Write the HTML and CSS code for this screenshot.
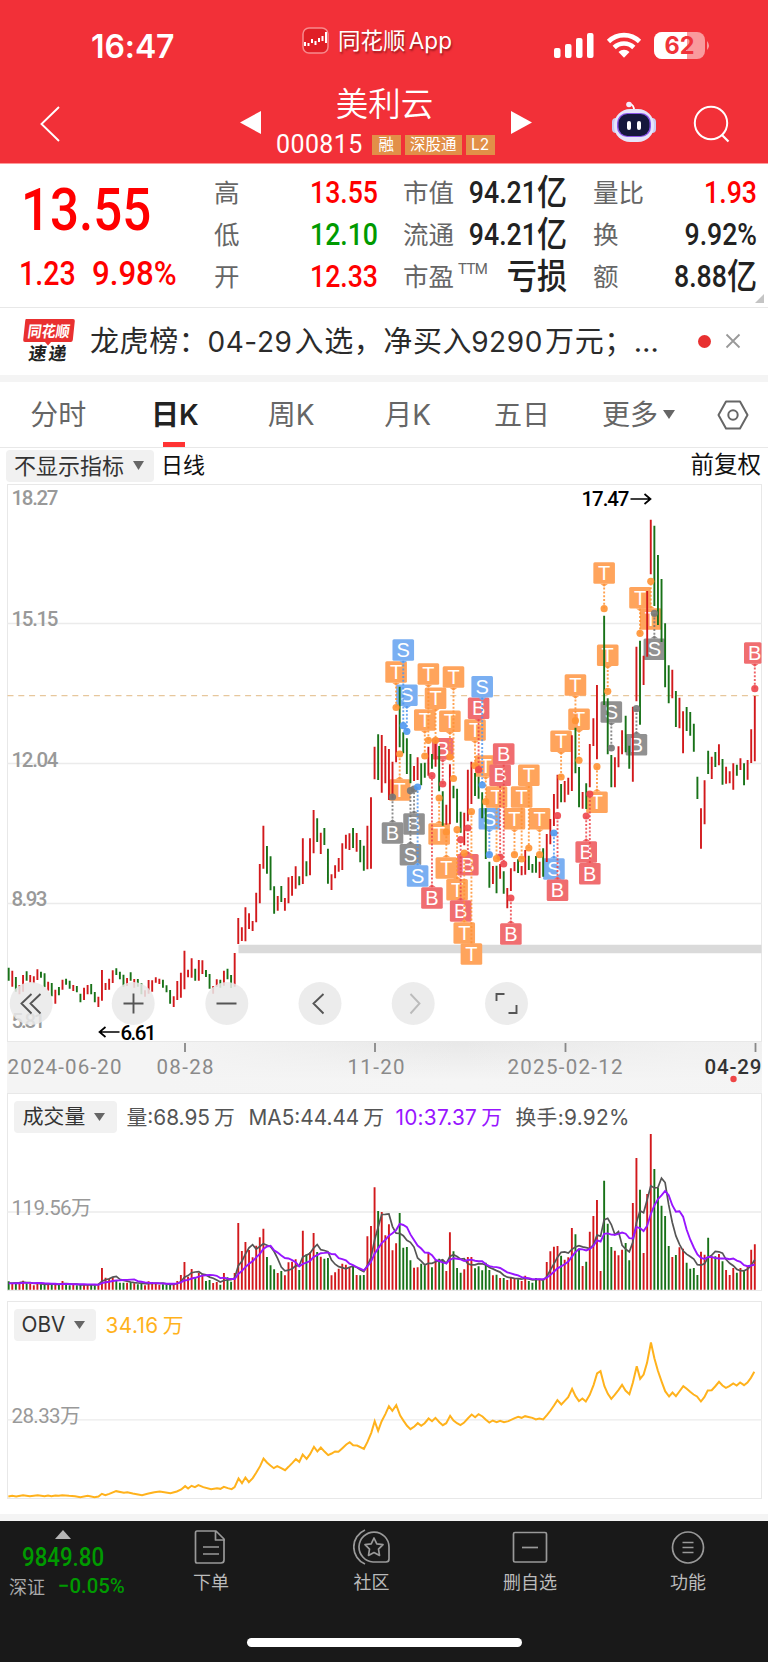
FILE: index.html
```html
<!DOCTYPE html>
<html lang="zh-CN">
<head>
<meta charset="utf-8">
<title>美利云 000815</title>
<link rel="stylesheet" href="styles.css">
</head>
<body>
<header class="top">
  <div class="status">
    <span class="time">16:47</span>
    <span class="app">
      <svg width="27" height="27" viewBox="0 0 27 27"><rect x="1" y="1" width="25" height="25" rx="6" fill="#e01f26" stroke="#f78a8d" stroke-width="1.5"/><path d="M3 15v4M6.500 16v3M10 12v4M13.500 14v4M17 11v4M20.500 9v5M24 5v11" stroke="#fff" stroke-width="2"/></svg>
      <span class="appname">同花顺 App</span>
    </span>
    <svg class="signals" width="158" height="30" viewBox="552 31 158 30">
      <g fill="#fff"><rect x="553" y="48" width="6.500" height="10" rx="2"/><rect x="564" y="44" width="6.500" height="14" rx="2"/><rect x="575" y="38" width="6.500" height="20" rx="2"/><rect x="586" y="33" width="6.500" height="25" rx="2"/></g>
      <g fill="none" stroke="#fff" stroke-width="4.600"><path d="M607.500 41.500a22 22 0 0 1 31 0"/><path d="M613.200 47.500a14 14 0 0 1 19.600 0"/></g>
      <path d="M617.500 52a8 8 0 0 1 11 0l-5.500 5.800z" fill="#fff"/>
      <rect x="653" y="32" width="51" height="27" rx="8" fill="#f99a9d"/><path d="M661 32h25v27h-25a8 8 0 0 1-8-8v-11a8 8 0 0 1 8-8z" fill="#fff"/><path d="M706 41q4 4.500 0 9z" fill="#f99a9d"/>
      <text x="663.500" y="54" textLength="30" lengthAdjust="spacingAndGlyphs" font-family="Inter" font-weight="700" font-size="24" fill="#f0333a">62</text>
    </svg>
  </div>
  <div class="titlebar">
    <svg class="back" width="20" height="36" viewBox="0 0 20 36"><path d="M19 1 1.500 18 19 35" fill="none" stroke="#fff" stroke-width="1.900"/></svg>
    <svg class="prev" width="21" height="23" viewBox="0 0 21 23"><path d="M21 0v23L0 11.500z" fill="#fff"/></svg>
    <div class="stock">
      <h1>美利云</h1>
      <div class="code"><span>000815</span><i>融</i><i class="w3">深股通</i><i>L2</i></div>
    </div>
    <svg class="next" width="21" height="23" viewBox="0 0 21 23"><path d="M0 0v23L21 11.500z" fill="#fff"/></svg>
    <svg class="robot" width="46" height="42" viewBox="0 0 46 42">
      <path d="M23 9q0-5-4-6" stroke="#fff" stroke-width="1.800" fill="none"/><circle cx="18" cy="3.500" r="2.800" fill="#f5edff"/>
      <rect x="1" y="17" width="8" height="15" rx="4" fill="#c8cdf3"/><rect x="37" y="17" width="8" height="15" rx="4" fill="#c8cdf3"/>
      <rect x="3" y="8" width="40" height="33" rx="16" fill="#e6e5fa"/><rect x="6" y="12" width="34" height="24" rx="10" fill="#8b55e8"/><rect x="7.500" y="13" width="31" height="22" rx="9" fill="#15183c"/>
      <path d="M18 22v5M28 22v5" stroke="#fff" stroke-width="4" stroke-linecap="round"/>
    </svg>
    <svg class="search" width="37" height="38" viewBox="0 0 37 38"><circle cx="18" cy="18" r="16.200" fill="none" stroke="#fff" stroke-width="2"/><path d="m29 30 6.500 6.500" stroke="#fff" stroke-width="2.200"/></svg>
  </div>
</header>

<section class="quote">
  <div class="price red"><b class="last"><span>13.55</span></b><div class="chg"><span>1.23</span><span>9.98%</span></div></div>
  <dl class="c1"><dt>高</dt><dd class="red">13.55</dd><dt>低</dt><dd class="green">12.10</dd><dt>开</dt><dd class="red">12.33</dd></dl>
  <dl class="c2"><dt>市值</dt><dd>94.21<em>亿</em></dd><dt>流通</dt><dd>94.21<em>亿</em></dd><dt>市盈<sup>TTM</sup></dt><dd><em>亏损</em></dd></dl>
  <dl class="c3"><dt>量比</dt><dd class="red">1.93</dd><dt>换</dt><dd>9.92%</dd><dt>额</dt><dd>8.88<em>亿</em></dd></dl>
  <svg class="corner" width="9" height="9"><path d="M9 0v9H0z" fill="#c4c4c4"/></svg>
</section>

<section class="news">
  <svg width="54" height="46" viewBox="22 318 54 46">
    <path d="M26 319h47q2 0 1.800 2l-2 19q-.3 2-2 2H51l-3 3.500-3-3.500H25q-2 0-1.800-2l2-19q.2-2 .8-2z" fill="#e93030"/>
    <g font-family="Noto Sans CJK SC" font-weight="700" transform="translate(48 337) skewX(-8)"><text x="-21" y="0" font-size="15.500" textLength="42" lengthAdjust="spacingAndGlyphs" fill="#fff">同花顺</text><text x="-17" y="23.500" font-size="18" textLength="38" fill="#222">速递</text></g>
  </svg>
  <p>龙虎榜：<b>04-29</b>入选，净买入<b>9290</b>万元；…</p>
  <span class="dot"></span>
  <svg width="16" height="16" viewBox="0 0 16 16"><path d="m1.500 1.500 13 13m0-13-13 13" stroke="#999" stroke-width="1.800"/></svg>
</section>

<nav class="tabs">
  <span>分时</span><span class="on">日K</span><span>周K</span><span>月K</span><span>五日</span><span>更多<svg width="12" height="9"><path d="M0 0h12L6 9z" fill="#666"/></svg></span>
  <svg class="gear" width="32" height="30" viewBox="0 0 32 30"><path d="M9 1.500h14L30.500 15 23 28.500H9L1.500 15z" fill="none" stroke="#666" stroke-width="2" stroke-linejoin="round"/><circle cx="16" cy="15" r="4.700" fill="none" stroke="#666" stroke-width="2"/></svg>
</nav>

<main>
<div class="indicator"><span class="pick">不显示指标<svg width="11" height="9"><path d="M0 0h11L5.500 9z" fill="#666"/></svg></span><span>日线</span><span class="adj">前复权</span></div>

<section class="panel kline">
  <svg width="755" height="558" viewBox="6.500 484 755 558">
    <path d="M7 623.500H761M7 763.500H761M7 903.500H761" stroke="#ebebeb" stroke-width="1.300"/>
    <path d="M7 695.700H761" stroke="#e7c79c" stroke-width="1.300" stroke-dasharray="6 4.800"/>
    <path d="M238 949H761" stroke="#dadada" stroke-width="8.400"/>
    <g class="axis"><text x="11" y="505" textLength="47">18.27</text><text x="11" y="626" textLength="47">15.15</text><text x="11" y="766.500" textLength="47">12.04</text><text x="11" y="906" textLength="36">8.93</text><text x="11" y="1028" textLength="34">5.81</text></g>
    <g id="marks"></g>
    <g id="lines"></g>
    <path id="kred" class="bar r"/><path id="kgreen" class="bar g"/>
    <g id="dots"></g>
    <g fill="#e9e9e9" fill-opacity=".86"><circle cx="30.700" cy="1003.500" r="21.500"/><circle cx="132.700" cy="1003.500" r="21.500"/><circle cx="226.300" cy="1003.500" r="21.500"/><circle cx="319.500" cy="1003.500" r="21.500"/><circle cx="412.700" cy="1003.500" r="21.500"/><circle cx="506" cy="1003.500" r="21.500"/></g>
    <g fill="none" stroke="#555" stroke-width="1.900"><path d="M31 994l-10 9.500 10 10M40 994l-10 9.500 10 10M123 1003.500h20M133 993.500v20M216 1003.500h20M323 994l-10 9.500 10 10M496 1001v-7h8M508 1013h8v-8"/><path d="M410 994l9 9.500-9 10" stroke="#bbb"/></g>
    <g class="peak"><text x="581" y="506" textLength="48">17.47</text><text x="120" y="1039.500" textLength="36">6.61</text><path d="M630 499H650m-6-5 6 5-6 5M119 1032H99m6-5-6 5 6 5"/></g>
  </svg>
</section>

<svg class="dates" width="755" height="51" viewBox="6.500 1042 755 51">
  <path d="M184.500 1043v9M374.500 1043v9M565 1043v9M755 1043v9" stroke="#888" stroke-width="1.800"/>
  <text x="7" y="1074" textLength="114">2024-06-20</text><text x="156" y="1074" textLength="57">08-28</text><text x="347" y="1074" textLength="57">11-20</text><text x="507" y="1074" textLength="115">2025-02-12</text><text class="now" x="704" y="1074" textLength="57">04-29</text>
  <circle cx="733" cy="1079" r="3.200" fill="#ee4545"/>
</svg>

<section class="panel volume">
  <svg width="755" height="198" viewBox="6.500 1093 755 198">
    <path d="M7 1212H761" stroke="#ebebeb" stroke-width="1.300"/>
    <text class="axisl" x="11" y="1215" textLength="80">119.56万</text>
    <path id="vred" class="bar r"/><path id="vgreen" class="bar g"/>
    <path id="ma5" fill="none" stroke="#555" stroke-width="1.700"/><path id="ma10" fill="none" stroke="#9815ff" stroke-width="1.900"/>
  </svg>
  <div class="legend"><span class="pick">成交量<svg width="11" height="8"><path d="M0 0h11L5.500 8z" fill="#666"/></svg></span><span class="v1">量:68.95<i>万</i></span><span class="v2">MA5:44.44<i>万</i></span><span class="v3">10:37.37<i>万</i></span><span>换手:9.92%</span></div>
</section>

<section class="panel obv">
  <svg width="755" height="198" viewBox="6.500 1301.500 755 198">
    <path d="M7 1420.300H761" stroke="#ebebeb" stroke-width="1.300"/>
    <text class="axisl" x="11" y="1423" textLength="69">28.33万</text>
    <g transform="translate(0 1300) scale(.4898 .33333)"><polyline vector-effect="non-scaling-stroke" fill="none" stroke="#ffb21c" stroke-width="2" points="16,591 24,589 32,591 46,587 60,590 76,587 90,590 97,588 104,590 112,588 119,589 126,587 140,589 152,590 163,593 178,589 192,593 200,591 207,583 214,587 222,583 236,575 252,580 259,578 270,582 289,587 300,583 314,578 325,576 347,581 360,576 369,570 377,560 383,567 390,559 397,563 404,557 414,563 430,569 442,566 449,568 456,562 464,566 472,569 478,563 486,537 493,551 500,534 507,548 515,536 522,520 530,500 537,477 544,489 551,498 558,506 565,500 573,506 581,512 588,502 596,490 603,479 610,487 617,465 625,478 632,464 640,442 647,456 654,444 662,457 669,467 676,462 683,456 690,457 698,446 706,435 713,428 720,437 728,438 742,448 749,428 757,400 764,365 771,394 778,366 786,343 793,320 800,334 808,317 816,348 823,364 830,379 837,389 845,381 852,371 859,379 866,371 874,357 881,365 888,355 896,368 903,377 910,371 918,349 925,363 932,371 939,377 946,370 954,357 962,345 969,353 976,344 984,351 991,361 998,369 1005,363 1013,368 1020,364 1028,368 1037,365 1050,356 1057,352 1064,355 1071,350 1080,353 1086,355 1093,360 1100,357 1108,360 1116,346 1123,333 1130,318 1137,302 1145,315 1152,304 1159,293 1167,268 1174,290 1181,305 1188,297 1195,306 1203,286 1211,256 1218,222 1225,215 1233,260 1240,283 1247,298 1254,286 1262,271 1269,256 1276,273 1284,284 1291,250 1299,200 1306,238 1313,225 1320,190 1328,129 1335,176 1342,213 1350,247 1357,275 1365,291 1372,279 1379,290 1386,276 1394,260 1401,268 1408,277 1415,285 1422,291 1430,306 1437,293 1444,273 1452,272 1459,261 1467,247 1474,258 1481,265 1488,260 1496,252 1503,258 1510,249 1518,257 1525,249 1532,235 1539,217"/></g>
  </svg>
  <div class="legend"><span class="pick">OBV<svg width="11" height="8"><path d="M0 0h11L5.500 8z" fill="#666"/></svg></span><span class="v4">34.16<i>万</i></span></div>
</section>
</main>

<footer>
  <div class="index"><svg width="16" height="9"><path d="M8 0l8 9H0z" fill="#b5b5b5"/></svg><b><span>9849.80</span></b><div><em>深证</em><span>−0.05%</span></div></div>
  <a class="f1"><svg width="36" height="36" viewBox="0 0 36 36"><path d="M4 2h19l8 8v21q0 3-3 3H4q-1.500 0-1.500-2V4Q2.500 2 4 2zM22.500 2v9H32M10 18h16M10 25h16"/></svg>下单</a>
  <a class="f2"><svg width="38" height="36" viewBox="0 0 38 36"><path d="M20 33A15 15 0 1 1 36 18v12q0 3-3 3zM12 1A18.500 18.500 0 0 0 12 35"/><path d="m21 9 2.800 5.800 6.200.9-4.500 4.400 1 6.300-5.500-2.900-5.500 2.900 1-6.300-4.500-4.400 6.200-.9z"/></svg>社区</a>
  <a class="f3"><svg width="36" height="36" viewBox="0 0 36 36"><rect x="1.500" y="3.500" width="33" height="29.500" rx="1.500"/><path d="M10 18.500h16"/></svg>删自选</a>
  <a class="f4"><svg width="36" height="36" viewBox="0 0 36 36"><circle cx="18" cy="18.500" r="15.500"/><path d="M12.500 13.500h11M12.500 18.500h11M12.500 23.500h11"/></svg>功能</a>
  <div class="home"></div>
</footer>
<script src="chart.js"></script>
</body>
</html>
```

FILE: styles.css
```css
* { box-sizing: border-box; }
html { height: 1662px; overflow: hidden; }
body { margin: 0; width: 768px; height: 1662px; background: #fff; color: #222; font-family: Inter, "Noto Sans CJK SC", sans-serif; overflow: hidden; }
svg { display: block; flex: none; }
b, i, em { font-style: normal; font-weight: inherit; }
span { white-space: nowrap; }
.red { color: #f00; }
.green { color: #009a00; }

.top { height: 164px; background: #f23038; color: #fff; border-bottom: 1px solid #f99; }
.status { display: flex; height: 92px; padding-left: 91px; }
.time { width: 211px; padding-top: 27px; font-weight: 600; font-size: 32px; line-height: 39px; letter-spacing: -.1px; }
.app { display: flex; width: 251px; padding-top: 27px; gap: 9px; }
.appname { font-size: 22.500px; line-height: 28px; word-spacing: -3px; text-shadow: 1px 2px 2px #9b1b20; }
.signals { margin-top: 31px; }
.titlebar { display: flex; height: 71px; }
.back { margin: 14px 180px 0 40px; }
.prev { margin-top: 19px; }
.stock { width: 250px; text-align: center; }
.stock h1 { margin: -7px 3px 0 0; font-weight: 350; font-size: 32.500px; line-height: 40px; }
.code { display: flex; margin: 9px 0 0 15px; gap: 4px; align-items: center; }
.code span { font: 25px/22px Roboto; letter-spacing: .4px; margin-right: 5px; }
.code i { width: 29px; height: 20px; background: #e28f48; font-size: 15.500px; line-height: 20px; }
.code .w3 { width: 57px; }
.next { margin: 19px 79px 0 0; }
.robot { margin: 9px 36px 0 0; }
.search { margin-top: 13px; }

.quote { position: relative; display: flex; height: 143.500px; font-family: Roboto, "Noto Sans CJK SC", sans-serif; border-bottom: 1px solid #e8e8e8; }
.price { width: 214px; font-weight: 500; }
.price span { display: inline-block; transform: scaleX(.865); transform-origin: 0 0; }
.last { display: block; padding: 16px 0 0 21px; font-size: 59px; line-height: 60px; }
.chg { display: flex; padding: 14px 0 0 19px; font-size: 33px; line-height: 40px; }
.chg span:first-child { width: 73px; }
.chg span:last-child { transform: scaleX(.945); }
.quote dl { display: grid; grid-template-columns: auto 1fr; grid-auto-rows: 42px; margin: 7.500px 0 0; line-height: 42px; }
.c1 { width: 164px; }
.c2 { width: 164px; margin-left: 25px !important; }
.c3 { width: 164px; margin-left: 26px !important; }
.quote dt { font-size: 25.500px; color: #666; width: 0; white-space: nowrap; }
.quote dt sup { font-size: 15px; line-height: 0; margin-left: 4px; vertical-align: 12px; letter-spacing: -.7px; }
.quote dd { margin: 0; font-weight: 500; font-size: 31px; text-align: right; transform: scaleX(.86); transform-origin: 100% 0; white-space: nowrap; }
.quote dd em { font-size: 35px; line-height: 0; vertical-align: -2px; font-weight: 500; }
.corner { position: absolute; right: 4px; bottom: 4px; }

.news { display: flex; align-items: center; height: 67.500px; padding: 0 0 0 22px; }
.news p { width: 606px; margin: -4px 0 0 14px; font-size: 29px; letter-spacing: .6px; white-space: nowrap; color: #2b2b2b; }
.news b { margin: 0 2px 0 -1px; font-size: 28px; }
.dot { width: 13px; height: 13px; border-radius: 50%; background: #e83030; margin: 0 14px 0 1.500px; }

.tabs { display: flex; align-items: center; height: 73px; border-top: 7px solid #f4f4f4; border-bottom: 1px solid #e8e8e8; font-size: 28px; color: #666; }
.tabs span { width: 116.500px; height: 65px; line-height: 66px; text-align: center; }
.tabs span:nth-child(5) { width: 112px; }
.tabs span:nth-child(6) { display: flex; align-items: center; width: 137px; padding-left: 24px; gap: 5px; }
.tabs .on { color: #222; font-weight: 600; background: linear-gradient(#f33, #f33) calc(50% - .5px) bottom / 22px 5px no-repeat; }
.gear { margin-left: 2px; }

.indicator { display: flex; align-items: center; height: 36px; padding: 0 7px 0 6px; gap: 7px; font-size: 22px; line-height: 30px; color: #111; }
.indicator > span { padding-bottom: 2px; }
.pick { display: inline-flex; align-items: center; justify-content: center; gap: 9px; height: 32px; background: #f1f1f1; border-radius: 4px; color: #333; }
.indicator .pick { width: 148px; padding: 0 2px 1px 0; }
.indicator .adj { margin-left: auto; font-size: 23.500px; }

.panel { display: grid; margin: 0 6.500px; box-shadow: inset 0 0 0 1px #e8e8e8; }
.panel > * { grid-area: 1 / 1; }
.axis, .axisl { font: 500 20.500px Roboto, "Noto Sans CJK SC"; fill: #999; }
.axisl { font-weight: 400; font-size: 20.500px; }
.bar { fill: none; stroke-width: 1.900; }
.r { stroke: #d2191c; }
.g { stroke: #187218; }
.mark { fill: #fff; font: 20px "Liberation Sans"; text-anchor: middle; }
.peak { font: 500 20.500px/1 Roboto; fill: #000; }
.kline svg { overflow: visible; }
.kline { position: relative; }
.peak path { fill: none; stroke: #000; stroke-width: 1.700; }
.dates { margin-left: 6.500px; background: linear-gradient(90deg, #f4f4f4 20%, transparent 60%, #f4f4f4aa 90%), linear-gradient(#e8e8e8, #f5f5f5 75%); font: 20.500px Roboto; fill: #8a8a8a; }
.now { fill: #333; font-weight: 500; }
.legend { display: flex; align-items: center; height: 32px; margin: 8px 0 0 7px; font-size: 20.800px; line-height: 28px; color: #555; }
.legend > span { padding-top: 2px; }
.legend i { margin-left: 4px; }
.legend .pick { width: 103px; margin-right: 10px; padding: 0 2px 0 0; }
.v1 { width: 122px; }
.v2 { width: 147px; }
.v3 { width: 120px; color: #9815ff; letter-spacing: .25px; }
.v3 + span { letter-spacing: .3px; }
.v4 { color: #ffb21c; letter-spacing: .4px; }
.obv { margin-top: 10px; }
.obv .legend .pick { width: 82px; }

footer { position: relative; display: flex; margin-top: 15px; height: 148px; border-top: 7px solid #f4f4f4; background: #191919; color: #bbb; font-size: 18px; }
.index { width: 128px; padding: 9px 0 0 9px; color: #009a00; font-family: Roboto; }
.index > svg { margin-left: 46px; }
.index b { display: block; margin: 3px 0 0 13px; font: 500 25px/31px Roboto; }
.index b span, .index div span { display: inline-block; transform: scaleX(.89); transform-origin: 0 0; }
.index div span { transform: scaleX(.97); }
.index div { display: flex; align-items: center; gap: 13px; height: 26px; font: 500 21px/24px Roboto; }
.index em { font: 18px/24px "Noto Sans CJK SC"; color: #aaa; }
footer a { display: flex; flex: none; flex-direction: column; align-items: center; gap: 4px; padding-top: 8px; line-height: 27px; width: 160px; }
footer a svg { fill: none; stroke: #999; stroke-width: 1.700; stroke-linejoin: round; }
.f1 { margin-left: 3px; }
footer .f2 { width: 161px; }
footer .f3 { width: 156px; }
.home { position: absolute; left: 247px; top: 117px; width: 275px; height: 9px; border-radius: 5px; background: #fff; }
```

FILE: chart.js
```js
// Day ranges as colour, high, low in thirds of a pixel below each segment's base line.
const segments = [
  [740, "G683-722 R692-740 G711-755 R735-763 R705-755 G694-722 R705-728 R709-730 R688-720 G695-713 G700-742 R725-752 G729-769 R749-791 G741-766 R719-749 G716-734 G722-746 R735-753 G738-757 G761-787 R743-780 R735-763 G732-763 G756-787 R770-801 R690-782 R729-750 R716-749 R691-729 G685-705 G695-718 G704-740 R714-738 G697-722 R717-743 G717-740 G730-763 R751-770 R720-761 R721-755 R712-728 R716-732 G719-743 G736-757 G750-791 R769-801 R723-780 R698-773 R632-748 R689-712 R655-713 G686-722 R660-722 R661-702 G690-711 G702-746 R738-761 R718-740 G719-743 R692-737 G686-718 G705-744 R639-740 R534-612 R562-603 R502-604 R520-567 R543-573 R458-547 R372-490 R257-386 G318-401 G349-451 G439-521 R468-512 G438-486 R474-512 R412-490 R408-467 R379-446 G409-436 R295-432 G364-409 R295-406 R210-340 G235-306 R278-342 G264-315 G326-431 R403-450 R376-415 R354-395 R310-390 R284-326 R280-330 G264-324 R279-335 G300-367 G317-392 R257-388 R172-386"],
  [480, "R800-898 G763-900 R765-938 R798-910 R807-960 R845-955 R704-847 G620-802 G757-820 G775-882 G822-910 R858-903 R832-900 G850-916 G848-893 R800-887 G822-866 R780-860 G798-934 G934-1037 R974-1034 R853-1033 G917-955 G926-1028 G995-1058 R998-1096 R869-1024 R845-972 G879-948 G890-956 G937-1015 G985-1137 G1145-1223 R1158-1212 G1157-1240 R1152-1196 G1174-1241 R1224-1285 R1165-1233 R1146-1174 G1138-1179 R1158-1186 R1110-1184 G1127-1170 G1152-1178 G1128-1178 R1145-1194 G1105-1190 R1062-1146 R1017-1093 R942-1038 R884-986 G912-967 R903-967 R893-944 R766-933 G743-880 G861-982 R936-986 G910-987 R792-922 R715-798 R615-838 R838-838 G407-675 G655-823 G825-922 R832-922 R799-862 R751-823 G707-817 G797-866 R680-905 R500-664 G482-734 R527-615 R333-530 R119-283 G137-378 G225-435 G297-486 G430-622 G556-670 R569-655 G633-741 R653-745 R694-820 G681-753 G696-767 G731-815 G890-957 R985-1106 R901-1033 G812-882 R830-897 G816-861 R793-856 G837-914 R860-911 R874-910 R850-929 G854-887 R835-870 G850-916 R840-899 R748-849 R648-844"]
];
// Tops of the volume columns, thirds of a pixel.
const volume = [574,579,577,580,572,580,582,586,578,583,583,584,582,583,583,573,584,586,584,586,585,584,585,582,586,581,534,563,567,562,570,578,578,578,576,580,583,581,586,574,576,580,584,583,584,583,580,573,555,516,560,537,562,549,553,573,570,579,576,584,549,562,575,549,399,483,456,480,502,467,442,416,501,526,538,549,543,556,517,515,508,540,422,493,487,429,486,500,506,504,556,547,536,521,524,532,528,555,556,555,439,408,292,363,366,436,403,481,460,369,473,471,511,533,532,521,526,488,532,510,506,510,543,427,484,534,548,538,501,501,535,529,541,518,540,556,554,564,564,570,563,564,568,573,557,573,578,564,568,571,516,484,470,468,497,509,502,414,433,476,528,515,425,378,330,543,272,401,471,482,496,479,459,511,339,204,299,489,312,132,237,293,347,378,468,501,495,472,476,518,536,534,555,485,494,443,499,499,492,514,540,555,534,548,534,541,529,479,463];
// Trade marks: letter, colour, day, label y, dot y.
const marks = "To108,672,707.5 Sb110,650,725.7 Sb111,695.3,731.3 To117,674,740.3 To119,698.3,740.3 To116,720,756 To124,677,778.5 To123,721.3,757 To130,730,765.7 Br131,708.3,769.7 Sb132,686.7,785 To109,790,754 Bg107,833,797 Sg112,854.7,790.7 Bg113,824,789 Sb114,876,787 Br118,898,775.7 Br121,748.7,784 To120,834,798 To122,868,832 To125,889.7,829.7 Br128,864.7,828 Br126,911,839.7 To127,933,853 To129,954,811.7 To133,766,801.7 Br138,754,864 Br137,775.3,857 To136,797,858.7 Sb134,818.7,854.7 To141,818.7,854.7 To143,797,859 To145,775.3,848 To148,818.7,854.7 Br140,934,898 Sb152,869,833 Br153,890.3,815.7 To154,741.3,777 To158,685,720.7 To159,719.3,760.3 Br161,852,816 Br162,873.7,794 To164,802.3,766.7 To166,573,608.7 To167,655.3,691.3 Sg168,712,748 To179,619,581.3 To176,597.7,633.3 Sg180,649.3,613.3 Bg175,744.7,708.7 Br208,653,688.7";
const tint = { o: ["#ffa45c", "#ff9233"], b: ["#7aaff2", "#4f98f0"], g: ["#919191", "#777"], r: ["#f06d70", "#ed454b"] };

const x = i => 8.2 + 3.587 * i;
const put = (id, attr, value) => document.getElementById(id).setAttribute(attr, value);
const price = { R: "", G: "" }, vol = { R: "", G: "" };
let day = 0;
for (const [base, text] of segments) {
  for (const item of text.split(" ")) {
    const color = item[0];
    const [hi, lo] = item.slice(1).split("-").map(Number);
    const px = x(day).toFixed(2);
    price[color] += `M${px} ${(base + hi / 3).toFixed(1)}V${(base + lo / 3).toFixed(1)}`;
    vol[color] += `M${px} ${(1090 + volume[day] / 3).toFixed(1)}V1289.700`;
    day++;
  }
}
put("kred", "d", price.R);
put("kgreen", "d", price.G);
put("vred", "d", vol.R);
put("vgreen", "d", vol.G);

const average = n => "M" + volume.map((_, i) => {
  const part = volume.slice(Math.max(0, i - n + 1), i + 1);
  while (part.length < n) part.push(581);
  return x(i).toFixed(1) + " " + (1090 + part.reduce((a, b) => a + b) / n / 3).toFixed(1);
}).join("L");
put("ma5", "d", average(5));
put("ma10", "d", average(10));

let boxes = "", lines = "", dots = "";
for (const item of marks.split(" ")) {
  const [d, y, dot] = item.slice(2).split(",").map(Number);
  const [fill, strong] = tint[item[1]];
  const cx = x(d), side = dot > y ? 1 : -1, edge = y + side * 10.8;
  // The newest day sits on the frame, so its label is cut at the right edge.
  const right = Math.min(cx + 10.8, 761);
  boxes += `<rect x="${cx - 10.8}" y="${y - 10.8}" width="${right - cx + 10.8}" height="21.600" rx="1.500" fill="${fill}"/><path d="M${cx - 4} ${edge}h8l-4 ${side * 3}z" fill="${fill}"/><text class="mark" x="${cx}" y="${y + 7}">${item[0]}</text>`;
  lines += `<path d="M${cx} ${edge}V${dot}" stroke="${strong}" stroke-width="1.900" stroke-dasharray="2 1.800" opacity=".85"/>`;
  dots += `<circle cx="${cx}" cy="${dot}" r="3.600" fill="${strong}" opacity=".9"/>`;
}
document.getElementById("marks").innerHTML = boxes;
document.getElementById("lines").innerHTML = lines;
document.getElementById("dots").innerHTML = dots;
```
